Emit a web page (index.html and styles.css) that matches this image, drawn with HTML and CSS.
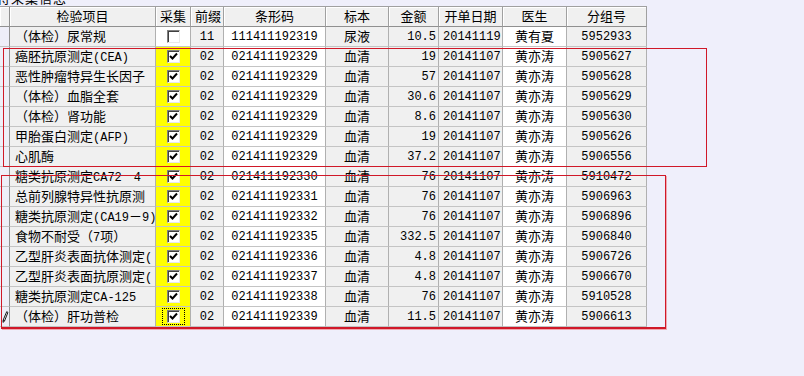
FILE: index.html
```html
<!DOCTYPE html>
<html lang="zh-CN">
<head>
<meta charset="utf-8">
<title>待采集信息</title>
<link rel="stylesheet" href="styles.css">
</head>
<body>
<div class="title"><span>待采集信息</span></div>
<div class="grid">
  <div class="c sel hd"></div><div class="c hd">检验项目</div><div class="c hd">采集</div><div class="c hd">前缀</div><div class="c hd">条形码</div><div class="c hd">标本</div><div class="c hd">金额</div><div class="c hd">开单日期</div><div class="c hd">医生</div><div class="c hd">分组号</div>

  <div class="c sel"></div><div class="c item">（体检）尿常规</div><div class="c chk off"><span class="cb"></span></div><div class="c g num ctr">11</div><div class="c num ctr">111411192319</div><div class="c g ctr">尿液</div><div class="c g num rt">10.5</div><div class="c g num ctr">20141119</div><div class="c ctr">黄有夏</div><div class="c g num ctr">5952933</div>

  <div class="c sel"></div><div class="c item">癌胚抗原测定<span class="en">(CEA)</span></div><div class="c chk"><span class="cb"><svg viewBox="0 0 11 11"><path d="M2 5 L4.5 7.5 L9 2.5" /></svg></span></div><div class="c g num ctr">02</div><div class="c num ctr">021411192329</div><div class="c g ctr">血清</div><div class="c g num rt">19</div><div class="c g num ctr">20141107</div><div class="c ctr">黄亦涛</div><div class="c g num ctr">5905627</div>

  <div class="c sel"></div><div class="c item">恶性肿瘤特异生长因子<br><span class="en">(TSGF)</span>测定</div><div class="c chk"><span class="cb"><svg viewBox="0 0 11 11"><path d="M2 5 L4.5 7.5 L9 2.5" /></svg></span></div><div class="c g num ctr">02</div><div class="c num ctr">021411192329</div><div class="c g ctr">血清</div><div class="c g num rt">57</div><div class="c g num ctr">20141107</div><div class="c ctr">黄亦涛</div><div class="c g num ctr">5905628</div>

  <div class="c sel"></div><div class="c item">（体检）血脂全套</div><div class="c chk"><span class="cb"><svg viewBox="0 0 11 11"><path d="M2 5 L4.5 7.5 L9 2.5" /></svg></span></div><div class="c g num ctr">02</div><div class="c num ctr">021411192329</div><div class="c g ctr">血清</div><div class="c g num rt">30.6</div><div class="c g num ctr">20141107</div><div class="c ctr">黄亦涛</div><div class="c g num ctr">5905629</div>

  <div class="c sel"></div><div class="c item">（体检）肾功能</div><div class="c chk"><span class="cb"><svg viewBox="0 0 11 11"><path d="M2 5 L4.5 7.5 L9 2.5" /></svg></span></div><div class="c g num ctr">02</div><div class="c num ctr">021411192329</div><div class="c g ctr">血清</div><div class="c g num rt">8.6</div><div class="c g num ctr">20141107</div><div class="c ctr">黄亦涛</div><div class="c g num ctr">5905630</div>

  <div class="c sel"></div><div class="c item">甲胎蛋白测定<span class="en">(AFP)</span></div><div class="c chk"><span class="cb"><svg viewBox="0 0 11 11"><path d="M2 5 L4.5 7.5 L9 2.5" /></svg></span></div><div class="c g num ctr">02</div><div class="c num ctr">021411192329</div><div class="c g ctr">血清</div><div class="c g num rt">19</div><div class="c g num ctr">20141107</div><div class="c ctr">黄亦涛</div><div class="c g num ctr">5905626</div>

  <div class="c sel"></div><div class="c item">心肌酶</div><div class="c chk"><span class="cb"><svg viewBox="0 0 11 11"><path d="M2 5 L4.5 7.5 L9 2.5" /></svg></span></div><div class="c g num ctr">02</div><div class="c num ctr">021411192329</div><div class="c g ctr">血清</div><div class="c g num rt">37.2</div><div class="c g num ctr">20141107</div><div class="c ctr">黄亦涛</div><div class="c g num ctr">5906556</div>

  <div class="c sel"></div><div class="c item">糖类抗原测定<span class="en">CA72　4</span></div><div class="c chk"><span class="cb"><svg viewBox="0 0 11 11"><path d="M2 5 L4.5 7.5 L9 2.5" /></svg></span></div><div class="c g num ctr">02</div><div class="c num ctr">021411192330</div><div class="c g ctr">血清</div><div class="c g num rt">76</div><div class="c g num ctr">20141107</div><div class="c ctr">黄亦涛</div><div class="c g num ctr">5910472</div>

  <div class="c sel"></div><div class="c item">总前列腺特异性抗原测<br>定<span class="en">(TPSA)</span>[化学法]</div><div class="c chk"><span class="cb"><svg viewBox="0 0 11 11"><path d="M2 5 L4.5 7.5 L9 2.5" /></svg></span></div><div class="c g num ctr">02</div><div class="c num ctr">021411192331</div><div class="c g ctr">血清</div><div class="c g num rt">76</div><div class="c g num ctr">20141107</div><div class="c ctr">黄亦涛</div><div class="c g num ctr">5906963</div>

  <div class="c sel"></div><div class="c item">糖类抗原测定<span class="en">(CA19</span>－<span class="en">9)</span></div><div class="c chk"><span class="cb"><svg viewBox="0 0 11 11"><path d="M2 5 L4.5 7.5 L9 2.5" /></svg></span></div><div class="c g num ctr">02</div><div class="c num ctr">021411192332</div><div class="c g ctr">血清</div><div class="c g num rt">76</div><div class="c g num ctr">20141107</div><div class="c ctr">黄亦涛</div><div class="c g num ctr">5906896</div>

  <div class="c sel"></div><div class="c item">食物不耐受（<span class="en">7</span>项）</div><div class="c chk"><span class="cb"><svg viewBox="0 0 11 11"><path d="M2 5 L4.5 7.5 L9 2.5" /></svg></span></div><div class="c g num ctr">02</div><div class="c num ctr">021411192335</div><div class="c g ctr">血清</div><div class="c g num rt">332.5</div><div class="c g num ctr">20141107</div><div class="c ctr">黄亦涛</div><div class="c g num ctr">5906840</div>

  <div class="c sel"></div><div class="c item">乙型肝炎表面抗体测定<span class="en">(</span><br>定量<span class="en">)</span></div><div class="c chk"><span class="cb"><svg viewBox="0 0 11 11"><path d="M2 5 L4.5 7.5 L9 2.5" /></svg></span></div><div class="c g num ctr">02</div><div class="c num ctr">021411192336</div><div class="c g ctr">血清</div><div class="c g num rt">4.8</div><div class="c g num ctr">20141107</div><div class="c ctr">黄亦涛</div><div class="c g num ctr">5906726</div>

  <div class="c sel"></div><div class="c item">乙型肝炎表面抗原测定<span class="en">(</span><br>定量<span class="en">)</span></div><div class="c chk"><span class="cb"><svg viewBox="0 0 11 11"><path d="M2 5 L4.5 7.5 L9 2.5" /></svg></span></div><div class="c g num ctr">02</div><div class="c num ctr">021411192337</div><div class="c g ctr">血清</div><div class="c g num rt">4.8</div><div class="c g num ctr">20141107</div><div class="c ctr">黄亦涛</div><div class="c g num ctr">5906670</div>

  <div class="c sel"></div><div class="c item">糖类抗原测定<span class="en">CA-125</span></div><div class="c chk"><span class="cb"><svg viewBox="0 0 11 11"><path d="M2 5 L4.5 7.5 L9 2.5" /></svg></span></div><div class="c g num ctr">02</div><div class="c num ctr">021411192338</div><div class="c g ctr">血清</div><div class="c g num rt">76</div><div class="c g num ctr">20141107</div><div class="c ctr">黄亦涛</div><div class="c g num ctr">5910528</div>

  <div class="c sel pen"><svg viewBox="0 0 10 16" width="10" height="16"><path d="M7.5 2 L8.8 3 L5 12.5 L3.3 14 L3.5 11.5 Z" fill="#ffffff" stroke="#000" stroke-width="1"/><path d="M3.5 11.5 L5 12.5" stroke="#000" stroke-width="1"/></svg></div><div class="c item">（体检）肝功普检</div><div class="c chk"><span class="focus"><span class="cb"><svg viewBox="0 0 11 11"><path d="M2 5 L4.5 7.5 L9 2.5" /></svg></span></span></div><div class="c g num ctr">02</div><div class="c num ctr">021411192339</div><div class="c g ctr">血清</div><div class="c g num rt">11.5</div><div class="c g num ctr">20141107</div><div class="c ctr">黄亦涛</div><div class="c g num ctr">5906613</div>
</div>
<div class="mark m1"></div>
<div class="mark m2"></div>
</body>
</html>
```

FILE: styles.css
```css
html, body {
  margin: 0;
  padding: 0;
  background: #efeffb;
  width: 804px;
  height: 376px;
  overflow: hidden;
  font-family: "Noto Sans CJK SC", sans-serif;
  font-size: 13px;
  color: #000;
}

.title {
  height: 6px;
  overflow: hidden;
}

.title span {
  display: block;
  margin-top: -10px;
  margin-left: -3px;
  font-family: "Noto Sans CJK SC", sans-serif;
  font-size: 13px;
  line-height: 16px;
  letter-spacing: 1px;
}

.grid {
  display: grid;
  grid-template-columns: 10px 146px 35px 33px 102px 63px 50px 64px 64px 80px;
  grid-auto-rows: 20px;
  width: 647px;
  border-top: 1px solid #a0a0a0;
}

.c {
  box-sizing: border-box;
  height: 20px;
  border-right: 1px solid #b0b0b0;
  border-bottom: 1px solid #c4c4c4;
  background: #ffffff;
  padding: 1px 4px 0;
  line-height: 16px;
  overflow: hidden;
  white-space: nowrap;
  font-family: "Noto Sans CJK SC", sans-serif;
}

.hd {
  background: #f0f0f0;
  border-right: 1px solid #a0a0a0;
  border-bottom: 1px solid #909090;
  box-shadow: inset 1px 1px 0 #ffffff;
  text-align: center;
  padding-top: 1px;
}

.sel {
  background: #eeeef8;
  border-right: 1px solid #909090;
  padding: 0;
}

.sel.hd {
  background: #f0f0f0;
}

.pen {
  display: flex;
  align-items: center;
  justify-content: center;
}

.item {
  background: #f0f0f0;
  padding-left: 5px;
  white-space: nowrap;
}

.en {
  font-family: "Liberation Mono", monospace;
  font-size: 12px;
}

.g {
  background: #f0f0f0;
}

.num {
  font-family: "Liberation Mono", monospace;
  font-size: 12px;
  padding-top: 2px;
}

.ctr {
  text-align: center;
}

.rt {
  text-align: right;
  padding-right: 2px;
}

.chk {
  background: #ffff00;
  display: flex;
  align-items: center;
  justify-content: center;
  padding: 0;
}

.chk.off {
  background: #ffffff;
}

.cb {
  box-sizing: border-box;
  width: 13px;
  height: 13px;
  background: #ffffff;
  border-top: 1px solid #808080;
  border-left: 1px solid #808080;
  border-right: 1px solid #e8e8e8;
  border-bottom: 1px solid #e8e8e8;
  box-shadow: inset 1px 1px 0 #404040;
  display: flex;
  align-items: center;
  justify-content: center;
}

.cb svg {
  width: 11px;
  height: 11px;
}

.cb svg path {
  fill: none;
  stroke: #000;
  stroke-width: 2;
}

.focus {
  box-sizing: border-box;
  width: 23px;
  height: 17px;
  border: 1px dotted #000;
  display: flex;
  align-items: center;
  justify-content: center;
}

.mark {
  position: absolute;
  box-sizing: border-box;
  border: 1px solid #d01828;
  pointer-events: none;
}

.m1 {
  left: 3px;
  top: 48px;
  width: 704px;
  height: 119px;
}

.m2 {
  left: 1px;
  top: 175px;
  width: 665px;
  height: 154px;
  border-bottom-width: 2px;
  box-shadow: 1px 1px 0 #f0a8b0;
}
```
